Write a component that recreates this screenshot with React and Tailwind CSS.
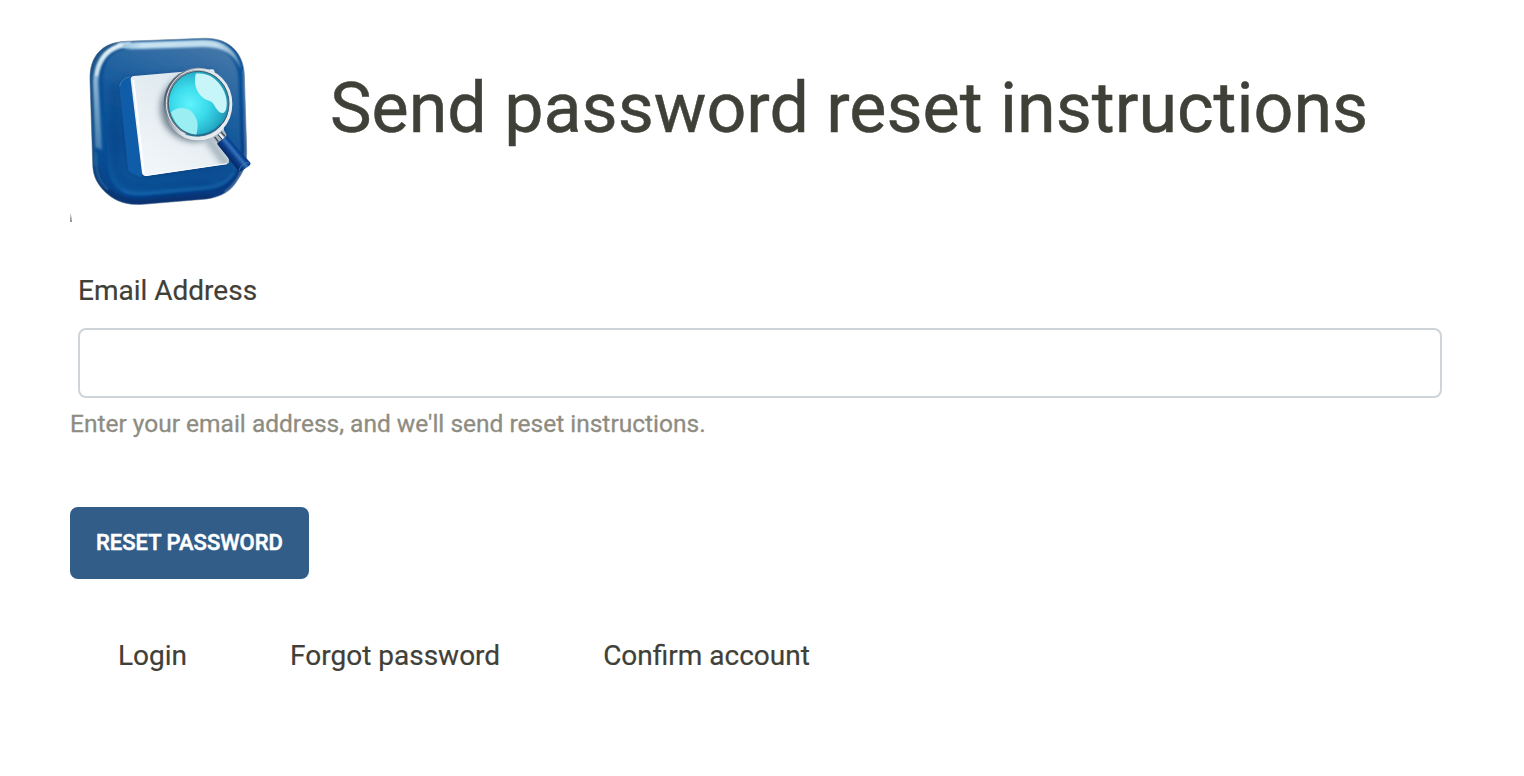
function Logo() {
  return (
    <svg className="block h-[200px] w-[200px] shrink-0" viewBox="30 6 600 600" aria-hidden="true">
      <defs>
        <linearGradient id="rim" x1="90" y1="60" x2="300" y2="550" gradientUnits="userSpaceOnUse">
          <stop offset="0" stopColor="#0d4c8c" />
          <stop offset="0.5" stopColor="#08529a" />
          <stop offset="1" stopColor="#073a80" />
        </linearGradient>
        <linearGradient id="face" x1="430" y1="80" x2="250" y2="540" gradientUnits="userSpaceOnUse">
          <stop offset="0" stopColor="#4075a8" />
          <stop offset="0.35" stopColor="#1d5f9f" />
          <stop offset="0.7" stopColor="#074e93" />
          <stop offset="1" stopColor="#07589f" />
        </linearGradient>
        <linearGradient id="side" x1="0" y1="80" x2="0" y2="500" gradientUnits="userSpaceOnUse">
          <stop offset="0" stopColor="#d5e8f4" />
          <stop offset="0.2" stopColor="#8fb7d5" />
          <stop offset="0.7" stopColor="#4c83b3" />
          <stop offset="1" stopColor="#2b6299" stopOpacity="0" />
        </linearGradient>
        <linearGradient id="top" x1="150" y1="0" x2="550" y2="0" gradientUnits="userSpaceOnUse">
          <stop offset="0" stopColor="#7eadd0" />
          <stop offset="0.25" stopColor="#c8e4f3" />
          <stop offset="0.8" stopColor="#c0ddee" />
          <stop offset="1" stopColor="#7599bb" />
        </linearGradient>
        <linearGradient id="paper" x1="220" y1="450" x2="400" y2="190" gradientUnits="userSpaceOnUse">
          <stop offset="0" stopColor="#f2f7fa" />
          <stop offset="0.5" stopColor="#e9f0f4" />
          <stop offset="1" stopColor="#dde8ef" />
        </linearGradient>
        <radialGradient id="lens" cx="390" cy="252" r="115" gradientUnits="userSpaceOnUse">
          <stop offset="0" stopColor="#5ff3fc" />
          <stop offset="0.45" stopColor="#3bdcec" />
          <stop offset="0.8" stopColor="#28b4cd" />
          <stop offset="1" stopColor="#1f92b4" />
        </radialGradient>
        <linearGradient id="ring" x1="310" y1="200" x2="515" y2="290" gradientUnits="userSpaceOnUse">
          <stop offset="0" stopColor="#3c4858" />
          <stop offset="0.15" stopColor="#717e8b" />
          <stop offset="0.5" stopColor="#dde4e9" />
          <stop offset="1" stopColor="#e8eef2" />
        </linearGradient>
        <linearGradient id="handle" x1="500" y1="410" x2="534" y2="382" gradientUnits="userSpaceOnUse">
          <stop offset="0" stopColor="#06265f" />
          <stop offset="0.35" stopColor="#0b3c8a" />
          <stop offset="0.62" stopColor="#3572b7" />
          <stop offset="0.8" stopColor="#0b469a" />
          <stop offset="1" stopColor="#08377e" />
        </linearGradient>
        <linearGradient id="sliver" x1="0" y1="580" x2="0" y2="606" gradientUnits="userSpaceOnUse">
          <stop offset="0" stopColor="#d5d5d5" />
          <stop offset="1" stopColor="#8a8a8a" />
        </linearGradient>
        <filter id="soft" x="-20%" y="-20%" width="140%" height="140%">
          <feGaussianBlur stdDeviation="3" />
        </filter>
        <filter id="shade" x="-30%" y="-30%" width="160%" height="160%">
          <feGaussianBlur stdDeviation="10" />
        </filter>
        <clipPath id="page">
          <path d="M222 168L455 148Q463 147 464 155L507 423Q508 430 500 432L256 468Q248 469 246 460L212 179Q211 169 222 168Z" />
        </clipPath>
        <clipPath id="tile">
          <path d="M198 64L430 55C505 52 550 96 553 164L560 390C561 425 551 455 536 475C514 514 486 530 440 537L250 553C195 558 156 540 127 507C106 482 98 461 98 428L90 180C88 108 126 67 198 64Z" />
        </clipPath>
      </defs>

      <path d="M198 64L430 55C505 52 550 96 553 164L560 390C561 425 551 455 536 475C514 514 486 530 440 537L250 553C195 558 156 540 127 507C106 482 98 461 98 428L90 180C88 108 126 67 198 64Z" fill="url(#rim)" stroke="#77889d" strokeWidth="2" />
      <g clipPath="url(#tile)">
        <path d="M96 190C98 118 130 67 210 65L222 80C150 81 116 120 115 190L126 390L104 382Z" fill="url(#side)" filter="url(#soft)" />
        <path d="M103 440L94 185C96 125 126 82 172 70" fill="none" stroke="#1c5285" strokeWidth="8" filter="url(#soft)" />
        <path d="M109 168C117 118 143 85 188 71" fill="none" stroke="#f0f8fc" strokeWidth="6" filter="url(#soft)" />
        <path d="M551 150L557 390C556 440 535 490 495 517" fill="none" stroke="#7fa1c5" strokeWidth="4" filter="url(#soft)" />
        <path d="M106 438C112 495 155 546 242 546L455 530" fill="none" stroke="#082e66" strokeWidth="13" opacity="0.65" filter="url(#soft)" />
        <path d="M108 398L109 440C113 475 125 492 144 508" fill="none" stroke="#2f6da6" strokeWidth="5" filter="url(#soft)" />
      </g>
      <path d="M230 83L425 78C491 76 533 115 535 175L543 390C543 455 510 502 448 509L248 527C178 532 145 496 141 425L130 190C126 117 158 84 230 83Z" fill="url(#face)" filter="url(#soft)" />
      <path d="M185 78C200 67 210 67 240 66L430 59C495 58 532 92 544 150C525 105 492 82 430 81L235 87C205 88 195 88 185 78Z" fill="url(#top)" filter="url(#soft)" />
      <path d="M158 190L166 415C170 480 199 502 250 500L445 488" fill="none" stroke="#033b7e" strokeWidth="17" opacity="0.45" filter="url(#shade)" />
      <path d="M185 508C210 522 245 522 270 519L445 502C485 497 508 480 522 458" fill="none" stroke="#1c6fb8" strokeWidth="10" opacity="0.4" filter="url(#soft)" />

      <path d="M177 195L194 174L460 150L510 430L244 474L207 455Z" fill="#02366f" opacity="0.55" filter="url(#shade)" />
      <path d="M178 202Q176 193 183 186L194 174Q199 170 211 169L249 469Q241 473 233 468L212 458Q205 454 204 447Z" fill="#0f5da8" />
      <path d="M211 169L246 467L256 468L219 170Z" fill="#063778" />
      <path d="M179 199Q178 190 194 175L211 170" fill="none" stroke="#377eb8" strokeWidth="3" />
      <path d="M222 168L455 148Q463 147 464 155L507 423Q508 430 500 432L256 468Q248 469 246 460L212 179Q211 169 222 168Z" fill="url(#paper)" />
      <g clipPath="url(#page)">
        <circle cx="402" cy="264" r="101" fill="#566878" opacity="0.8" filter="url(#shade)" />
        <path d="M454 350L521 441L488 437L434 362Z" fill="#8596a5" opacity="0.7" filter="url(#shade)" />
        <path d="M220 180L252 460" stroke="#ffffff" strokeWidth="5" />
      </g>
      <path d="M256 467L501 431" stroke="#ffffff" strokeWidth="3" />

      <path d="M470 364L495 345Q504 350 510 360L570 427Q574 433 567 438L545 453Q539 456 533 449L473 374Z" fill="url(#handle)" />
      <path d="M538 451C540 438 554 427 567 428" fill="none" stroke="#4376ad" strokeWidth="3" />
      <path d="M457 352L488 329Q501 338 499 349L473 368Q461 367 457 352Z" fill="#aebbc5" />
      <path d="M464 351L475 365M474 344L487 358M483 336L496 350" stroke="#404a55" strokeWidth="4" />
      <path d="M478 342L490 355" stroke="#f8fcff" strokeWidth="5" />
      <ellipse cx="414" cy="252" rx="98" ry="104" fill="none" stroke="url(#ring)" strokeWidth="10" />
      <ellipse cx="416" cy="250" rx="97" ry="102" fill="none" stroke="#e4eaee" strokeWidth="3" />
      <ellipse cx="416" cy="250" rx="91" ry="96" fill="url(#lens)" stroke="#405c6d" strokeWidth="3" />
      <path d="M407 161C435 157 460 168 477 190C496 213 504 242 499 264C496 279 488 283 477 275C465 265 462 247 449 243C421 236 402 206 405 177Z" fill="#c7f5f8" />
      <path d="M333 277C346 261 378 258 396 276C415 295 416 321 409 344C373 341 346 318 333 277Z" fill="#9beff3" />
      <path d="M377 342C415 355 459 340 483 312" fill="none" stroke="#126b94" strokeWidth="5" opacity="0.7" />
      <path d="M30 580L32 580Q36 594 36 606H30Z" fill="url(#sliver)" />
    </svg>
  );
}

const links = ["Login", "Forgot password", "Confirm account"];

export default function App() {
  return (
    <main className="h-[776px] w-full bg-white px-[70px] pt-[22px] font-['Roboto',sans-serif] text-[28px] text-[#3f4037]">
      <header className="flex h-[200px] items-start">
        <Logo />
        <h1 className="mt-11 ml-[60px] text-[70px] leading-[84px] font-normal whitespace-nowrap [-webkit-text-stroke:0.5px]">
          Send password reset instructions
        </h1>
      </header>
      <form className="mt-12" onSubmit={(e) => e.preventDefault()}>
        <div className="px-2">
          <label htmlFor="email" className="block leading-[42px] [-webkit-text-stroke:0.2px]">Email Address</label>
          <input id="email" type="email" className="mt-4 block h-[70px] w-[1364px] rounded-lg border-2 border-[#ced4da] bg-white px-6 outline-none" />
        </div>
        <p className="mt-2 text-[24.5px] leading-9 text-[#8e8c82] [-webkit-text-stroke:0.3px]">
          Enter your email address, and we'll send reset instructions.
        </p>
        <button type="submit" className="mt-[65px] block h-[72px] w-[239px] rounded-lg bg-[#325d88] pb-0.5 text-[22px] font-medium whitespace-nowrap text-white uppercase [-webkit-text-stroke:0.5px]">
          Reset password
        </button>
      </form>
      <nav className="mt-[56px] flex gap-[103px] pl-12 leading-[42px] [-webkit-text-stroke:0.2px]">
        {links.map((link) => (
          <a key={link} href="#">{link}</a>
        ))}
      </nav>
    </main>
  );
}
